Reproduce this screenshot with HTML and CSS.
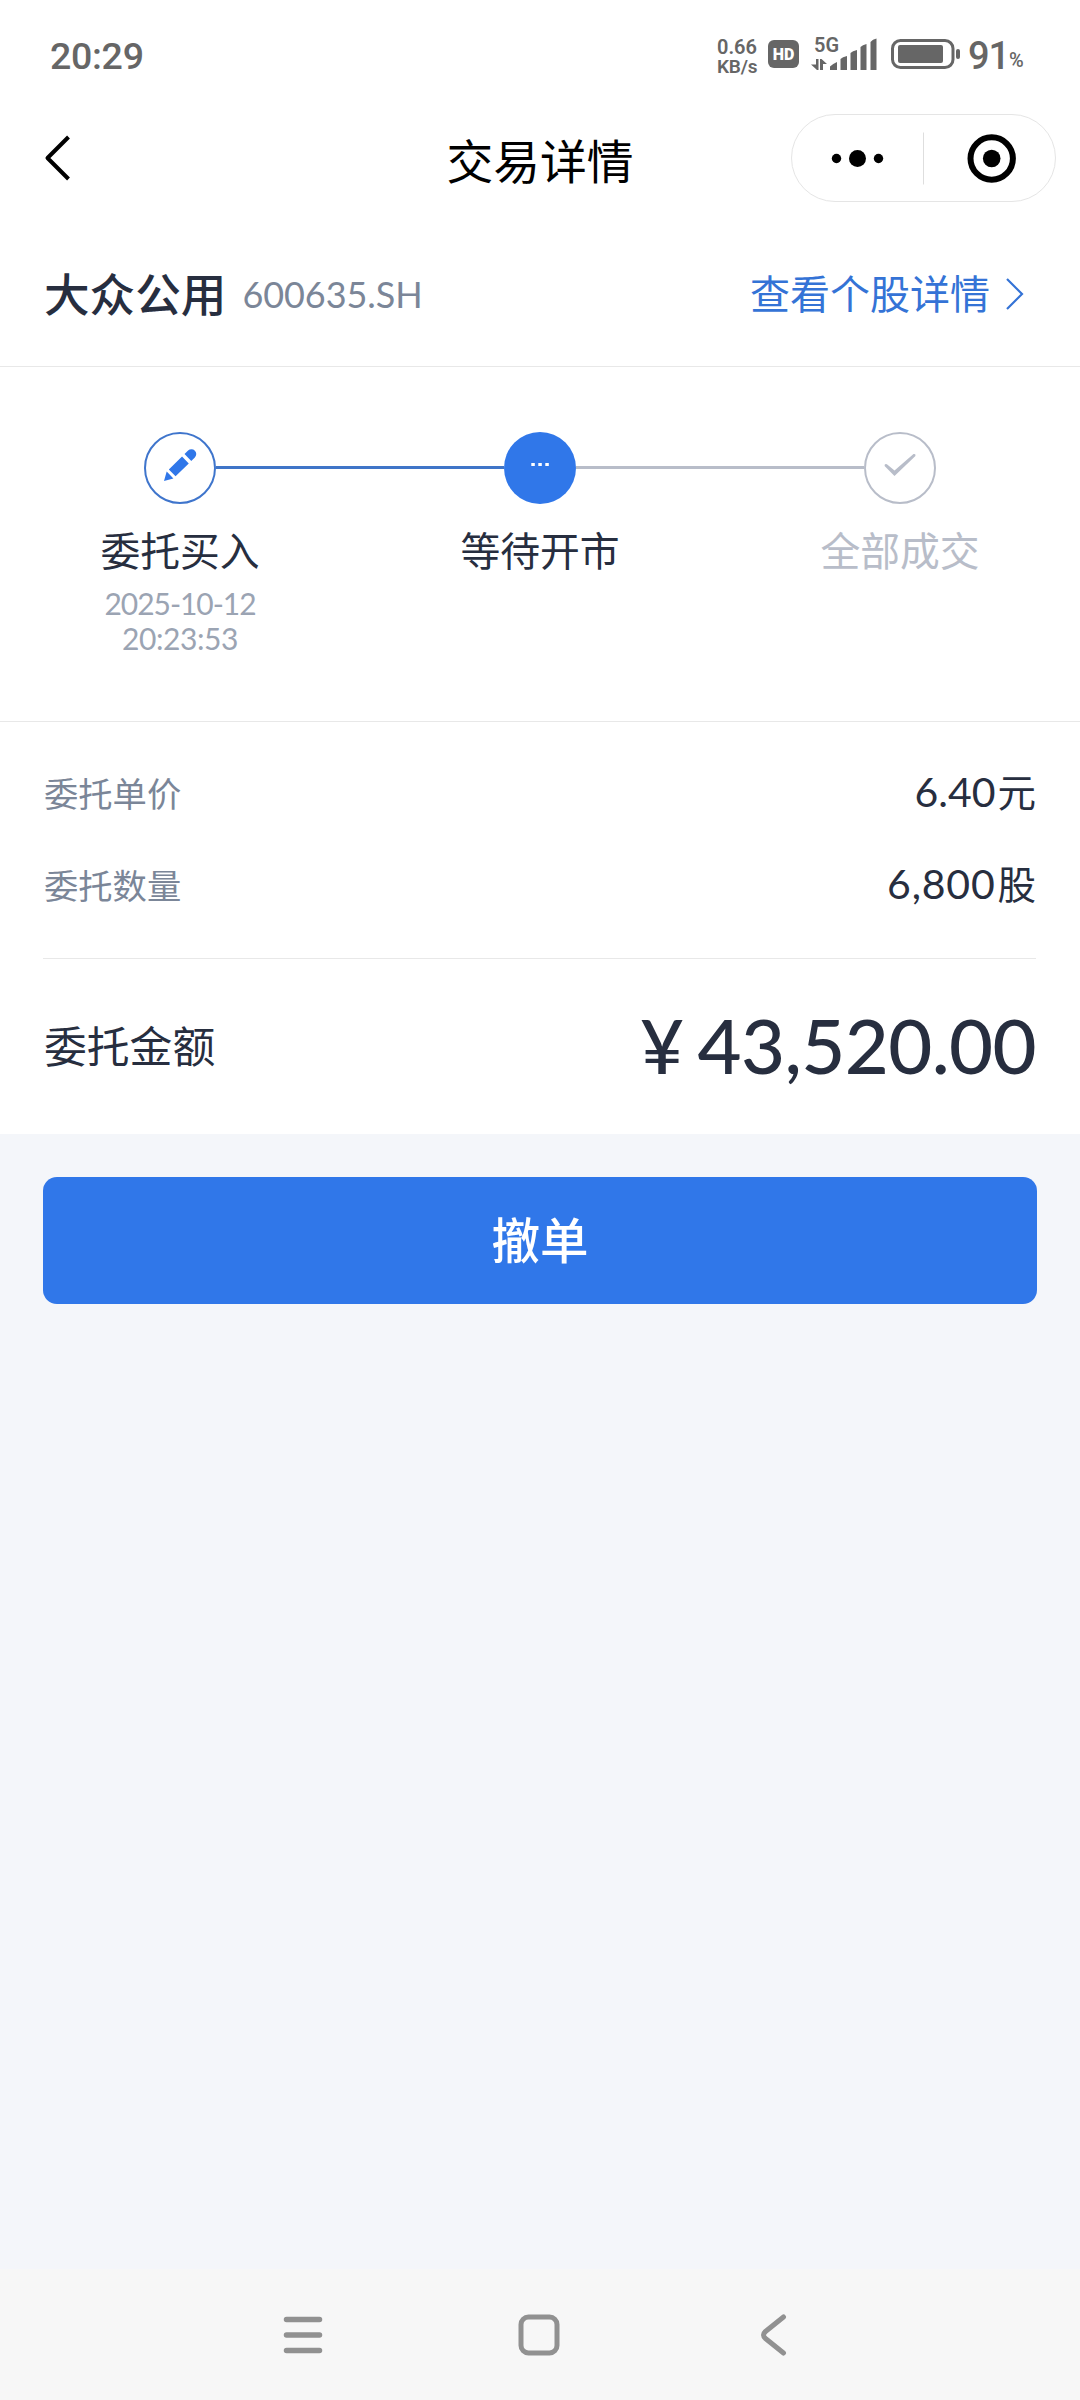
FILE: index.html
```html
<!DOCTYPE html>
<html lang="zh-CN">
<head>
<meta charset="utf-8">
<title>交易详情</title>
<link rel="stylesheet" href="styles.css">
</head>
<body>
<div class="screen">
  <div class="status">
    <span class="clock">20:29</span>
    <div class="status-right">
      <div class="speed"><span>0.66</span><span class="unit">KB/s</span></div>
      <span class="hd">HD</span>
      <div class="signal">
        <span class="net">5G</span>
        <svg width="68" height="34" viewBox="0 0 68 34" fill="#666">
          <path d="M5 22h2.500v11h-1.500L0 27.500h5zM9 33V22h1.500L16 27h-4v6z"/>
          <path d="M19 29.500q3-3 7-4.500v8h-7zM29.500 22q2-2 6.500-3v14h-6.500zM39.500 16q2-2 6.500-3v20h-6.500zM49.500 10q2-2 6-3v26h-6zM59.500 5q2-3 6-3.500V33h-6z"/>
        </svg>
      </div>
      <svg class="battery" width="69" height="32" viewBox="0 0 69 32">
        <rect x="1.500" y="2.500" width="60.500" height="27" rx="8" fill="none" stroke="#666" stroke-width="3"/>
        <rect x="7" y="7" width="45" height="18" rx="2" fill="#666"/>
        <rect x="65" y="11" width="4" height="10" rx="2" fill="#666"/>
      </svg>
      <span class="level">91</span><span class="percent">%</span>
    </div>
  </div>

  <header class="nav">
    <svg class="back" width="30" height="50" viewBox="0 0 30 50" fill="none" stroke="#000" stroke-width="4" stroke-linejoin="round"><path d="M26.500 4L5.500 25l21 21"/></svg>
    <h1 class="title">交易详情</h1>
    <div class="capsule">
      <svg width="263" height="86" viewBox="0 0 263 86">
        <circle cx="44.500" cy="43.500" r="4.700"/><circle cx="65.500" cy="43.500" r="8.500"/><circle cx="86.500" cy="43.500" r="4.700"/>
        <path d="M131.500 17.500v52" stroke="#dedede" stroke-width="1"/>
        <circle cx="199.700" cy="43.500" r="21.200" fill="none" stroke="#000" stroke-width="6"/><circle cx="199.700" cy="43.500" r="8.800"/>
      </svg>
    </div>
  </header>

  <section class="stock">
    <div class="stock-id"><span class="name">大众公用</span><span class="code">600635.SH</span></div>
    <a class="more"><span>查看个股详情</span><svg width="20" height="34" viewBox="0 0 20 34" fill="none" stroke="#3473d6" stroke-width="2.200"><path d="M2 2l15 15L2 32"/></svg></a>
  </section>

  <section class="steps">
    <div class="step">
      <div class="track"><i class="gap"></i>
        <svg width="72" height="72" viewBox="0 0 72 72"><circle cx="36" cy="36" r="35" fill="#fff" stroke="#3f75cc" stroke-width="2"/>
        <g fill="#3077e9" transform="translate(20 49) rotate(-44.500)"><path d="M0 0L8.500-4.800V4.800zM11.500-4.800H30V4.800H11.500zM33.500-4.800H38.500a4.800 4.800 0 0 1 0 9.600H33.500z"/></g></svg>
      <i class="line done"></i></div>
      <div class="step-name">委托买入</div>
      <div class="step-time"><span class="date">2025-10-12</span><br>20:23:53</div>
    </div>
    <div class="step">
      <div class="track"><i class="line done"></i>
        <svg width="72" height="72" viewBox="0 0 72 72"><circle cx="36" cy="36" r="36" fill="#3077e9"/><path d="M27.300 31h3.500v3h-3.500zM34.300 31h3.500v3h-3.500zM41.300 31h3.500v3h-3.500z" fill="#fff"/></svg>
      <i class="line"></i></div>
      <div class="step-name">等待开市</div>
    </div>
    <div class="step pending">
      <div class="track"><i class="line"></i>
        <svg width="72" height="72" viewBox="0 0 72 72"><circle cx="36" cy="36" r="35" fill="#fff" stroke="#b8bdc9" stroke-width="2"/><path d="M20.600 34q-.4-2.500 2.300-1.800L30.500 38.500 49.500 22q2.600-.6 1.900 1.900L30.500 44z" fill="#b8bdc9"/></svg>
      <i class="gap"></i></div>
      <div class="step-name">全部成交</div>
    </div>
  </section>

  <section class="details">
    <div class="row"><span class="label">委托单价</span><span class="value">6.40<b>元</b></span></div>
    <div class="row"><span class="label">委托数量</span><span class="value shares">6,800<b>股</b></span></div>
    <div class="total"><span class="total-label">委托金额</span><span class="amount"><span class="yen">¥</span>43,520.00</span></div>
  </section>

  <main class="action"><button class="cancel">撤单</button></main>

  <footer class="system">
    <svg width="40" height="42" viewBox="0 0 40 42" stroke="#919191" stroke-width="5.500" stroke-linecap="round"><path d="M3.500 5.500h33M3.500 21h33M3.500 36.500h33"/></svg>
    <svg width="42" height="42" viewBox="0 0 42 42" fill="none" stroke="#919191" stroke-width="5"><rect x="3" y="3" width="36" height="36" rx="7.500"/></svg>
    <svg width="40" height="42" viewBox="0 0 40 42" fill="none" stroke="#919191" stroke-width="5" stroke-linecap="round"><path d="M29.500 3L11.500 17.500q-4 3.500 0 7L29.500 39"/></svg>
  </footer>
</div>
</body>
</html>
```
FILE: styles.css
```css
* { box-sizing: border-box; }
body { margin: 0; background: #f4f6fa; color: #272e3f; font-family: "Noto Sans CJK SC", sans-serif; }
svg { display: block; flex: none; }
.screen { width: 1080px; height: 2400px; display: flex; flex-direction: column; overflow: hidden; }

.status { height: 110px; padding: 0 56px 0 50px; display: flex; justify-content: space-between; align-items: flex-start; background: #fff; color: #666; font-family: Roboto, sans-serif; font-weight: 500; }
.clock { margin-top: 34px; font-size: 37.500px; line-height: 44px; letter-spacing: -.3px; }
.status-right { display: flex; align-items: flex-start; }
.speed { width: 51px; margin-top: 38px; display: flex; flex-direction: column; font-size: 20px; line-height: 19px; font-weight: 600; }
.unit { font-size: 19px; line-height: 20px; letter-spacing: -.2px; }
.hd { width: 31px; height: 28px; margin: 40px 12px 0 0; border-radius: 6px; background: #666; color: #fff; font: 900 16px/29px Roboto, sans-serif; text-align: center; }
.signal { position: relative; width: 80px; padding-top: 37px; }
.net { position: absolute; left: 3px; top: 34px; font-size: 20px; line-height: 22px; font-weight: 600; }
.battery { margin: 38px 8px 0 0; }
.level { margin-top: 34px; width: 41px; font-size: 38px; line-height: 44px; letter-spacing: -1px; }
.percent { margin-top: 48px; width: 15px; font-size: 20px; line-height: 24px; }

.nav { height: 110px; display: grid; grid-template-columns: 1fr auto 1fr; background: #fff; }
.back { margin: 23px 0 0 42px; }
.title { margin: 14px 0 0; font-size: 46.800px; line-height: 70px; font-weight: 400; color: #000; }
.capsule { width: 265px; height: 88px; margin: 4px 24px 0 0; justify-self: end; border: 1px solid #e5e5e5; border-radius: 44px; }

.stock { height: 147px; padding: 0 55px 0 44px; display: flex; justify-content: space-between; align-items: center; background: #fff; border-bottom: 1px solid #e8e8e8; }
.stock-id { display: flex; align-items: center; gap: 16px; }
.name { margin-bottom: 3px; font-size: 45.600px; line-height: 64px; font-weight: 500; }
.code { padding-top: 1px; font: 36px/44px Lato, sans-serif; color: #7b8698; letter-spacing: -.05px; }
.more { display: flex; align-items: center; gap: 15px; font-size: 40px; line-height: 56px; color: #3473d6; }
.more span { margin-bottom: 2px; }
.more svg { margin-top: 2px; }

.steps { height: 355px; padding-top: 65px; display: grid; grid-template-columns: repeat(3, 1fr); background: #fff; border-bottom: 1px solid #e8e8e8; text-align: center; }
.track { display: flex; align-items: center; }
.line, .gap { flex: 1; height: 3px; margin-bottom: 1px; }
.line { background: #b8bdc9; }
.done { background: #3f75c8; }
.step-name { margin-top: 17px; font-size: 39.800px; line-height: 56px; }
.step-time { margin-top: 9px; font: 30px/35px Lato, sans-serif; letter-spacing: -.4px; color: #9ba4b3; }
.date { letter-spacing: -1.050px; }
.pending .step-name { color: #b8bdc9; }

.details { height: 412px; padding: 24px 44px 0 43px; background: #fff; }
.row { height: 92px; display: flex; justify-content: space-between; align-items: center; }
.label { padding-left: 1px; font-size: 34.300px; }
.label { margin-bottom: 1px; color: #7b8698; }
.value { font: 41px/56px Lato, "Noto Sans CJK SC", sans-serif; }
.value b { margin-left: 2px; font-size: 38.500px; font-weight: 400; letter-spacing: 0; }
.shares { letter-spacing: .8px; }
.total { height: 172px; margin-top: 28px; border-top: 1px solid #e8e8e8; display: flex; justify-content: space-between; align-items: center; }
.total-label { margin-bottom: 2px; padding-left: 1px; font-size: 42.800px; }
.amount { display: flex; font: 500 76px/90px Lato, sans-serif; letter-spacing: -.6px; }
.yen { margin-right: 14px; }

.action { flex: 1; padding: 43px 43px 0; }
.cancel { display: block; width: 100%; height: 127px; padding: 0 0 4px; border: 0; border-radius: 14px; background: #3077e9; color: #fff; font: 500 48.500px/123px "Noto Sans CJK SC", sans-serif; }
.system { height: 131px; padding: 0 286px 0 283px; display: flex; justify-content: space-between; align-items: center; background: #f7f7f7; }
```
